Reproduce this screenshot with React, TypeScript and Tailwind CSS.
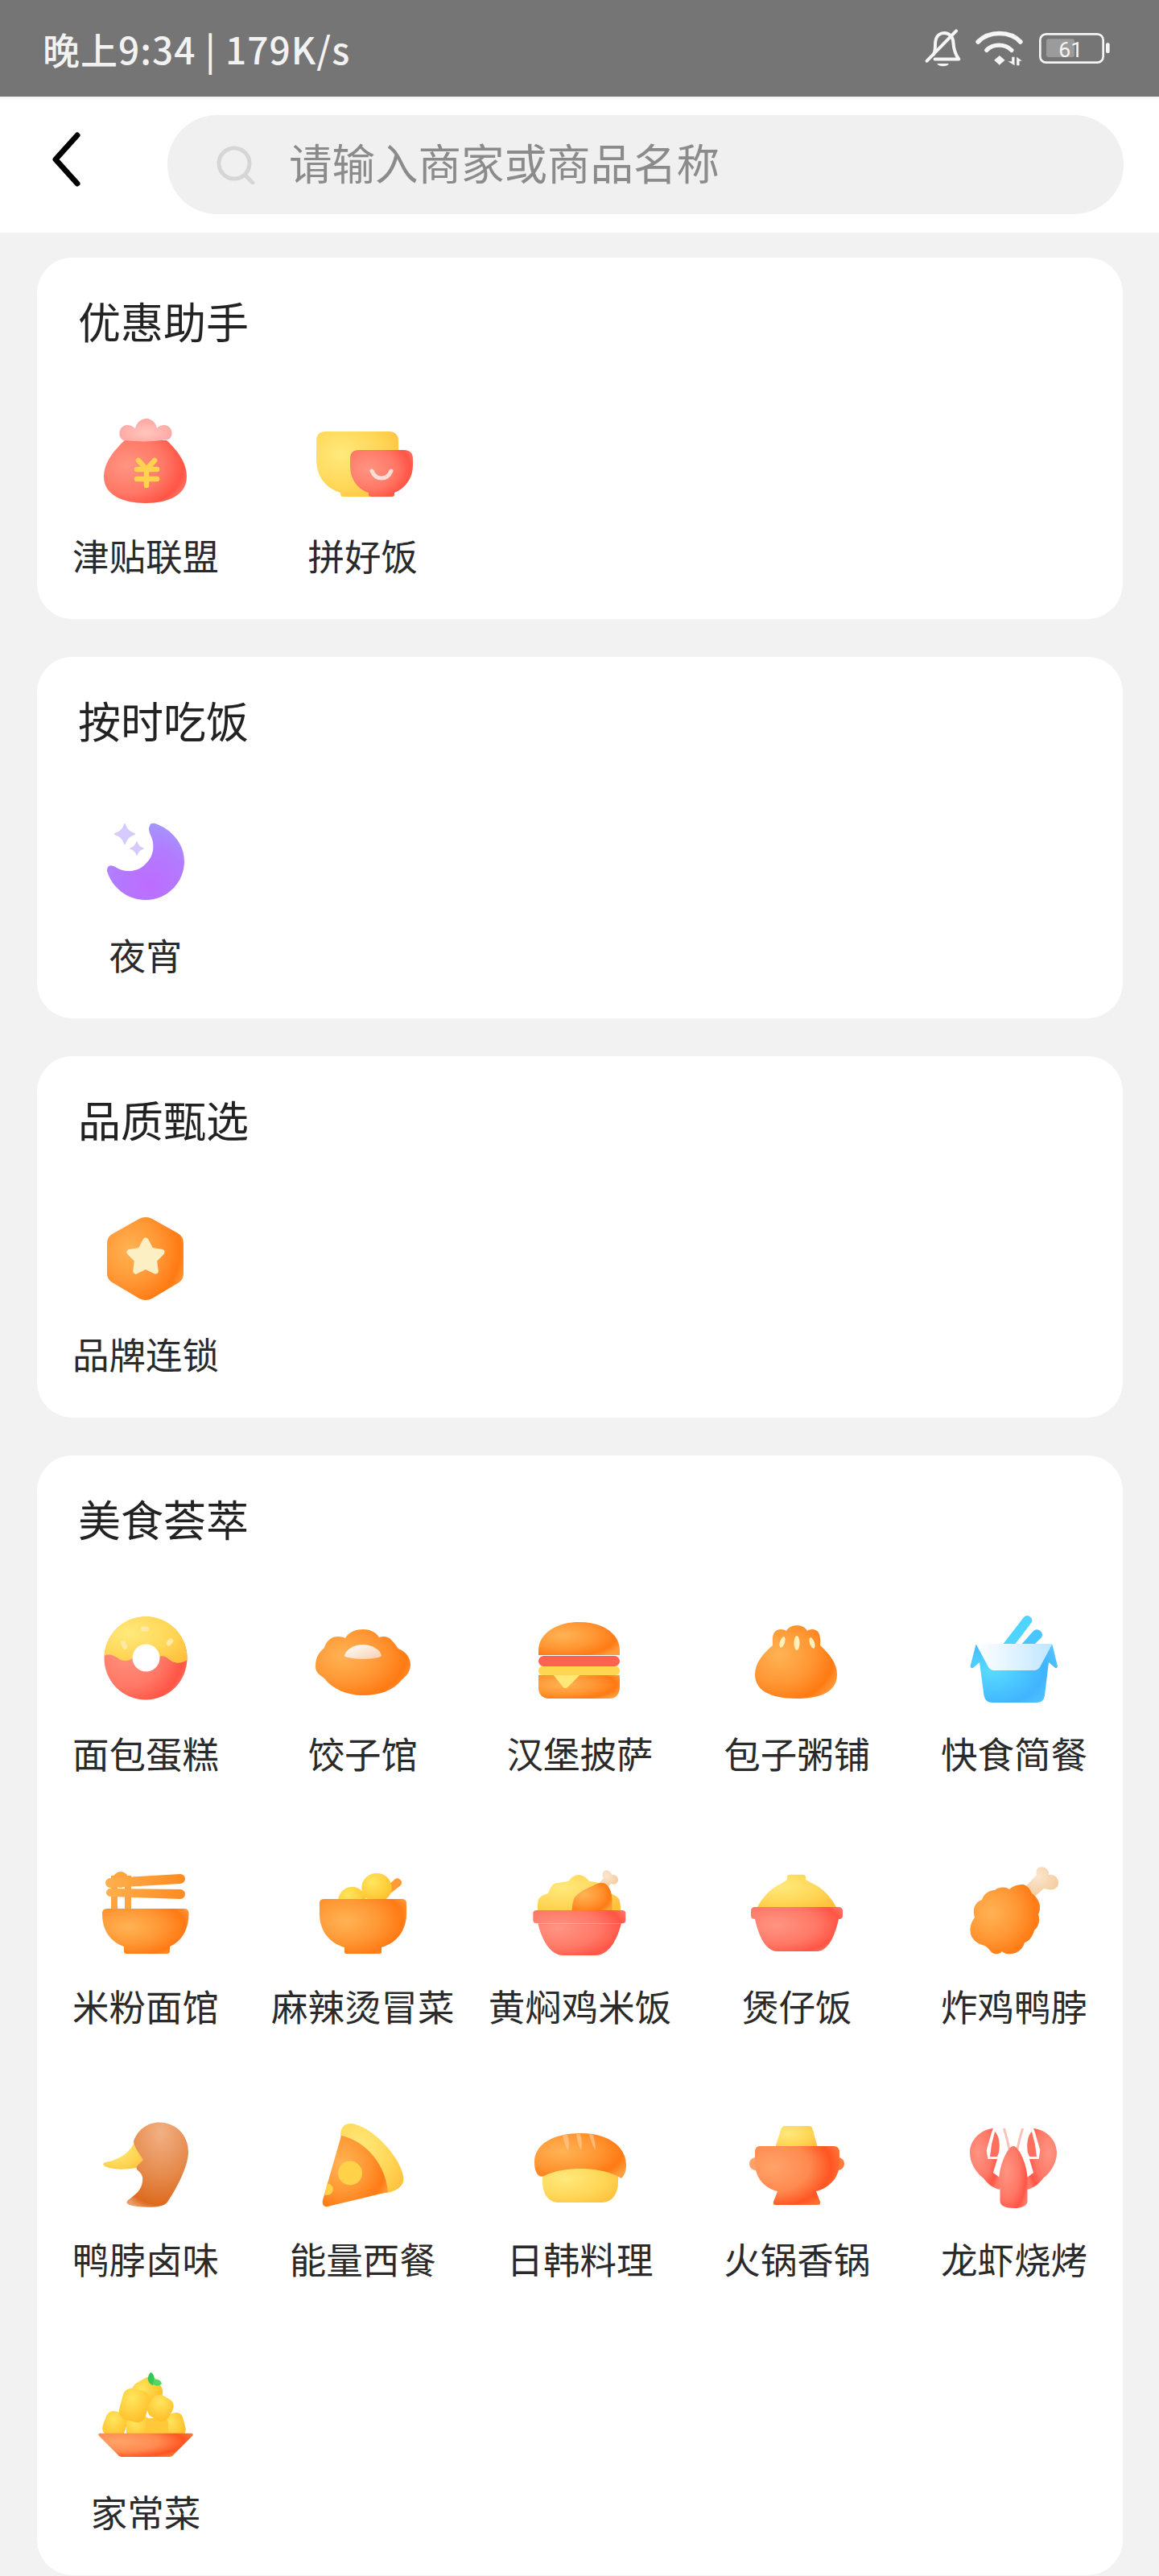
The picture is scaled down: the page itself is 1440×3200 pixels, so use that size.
import type { ReactNode } from "react";

// Shared gradients, referenced by every food icon
const SharedGradients = () => (
  <svg className="block h-0 w-0" aria-hidden="true">
    <defs>
      <radialGradient id="gOrange" cx=".3" cy=".4" r=".8">
        <stop offset="0" stopColor="#ffb354" />
        <stop offset=".5" stopColor="#ff9633" />
        <stop offset=".82" stopColor="#ff7a14" />
        <stop offset="1" stopColor="#ff9c3c" />
      </radialGradient>
      <linearGradient id="gOrangeL" x1="0" y1="0" x2="1" y2="0">
        <stop offset="0" stopColor="#ffb04f" />
        <stop offset="1" stopColor="#ff8a20" />
      </linearGradient>
      <radialGradient id="gRed" cx=".28" cy=".4" r=".8">
        <stop offset="0" stopColor="#ff9482" />
        <stop offset=".55" stopColor="#ff7866" />
        <stop offset=".85" stopColor="#ff5546" />
        <stop offset="1" stopColor="#ff7766" />
      </radialGradient>
      <radialGradient id="gYellow" cx=".3" cy=".35" r=".85">
        <stop offset="0" stopColor="#ffe97c" />
        <stop offset=".6" stopColor="#ffd656" />
        <stop offset="1" stopColor="#ffc03c" />
      </radialGradient>
      <radialGradient id="gNugget" cx=".35" cy=".3" r=".8">
        <stop offset="0" stopColor="#ffe65e" />
        <stop offset="1" stopColor="#ffbe28" />
      </radialGradient>
      <radialGradient id="gHot" cx=".22" cy=".35" r=".85">
        <stop offset="0" stopColor="#ffa36a" />
        <stop offset=".5" stopColor="#ff8a50" />
        <stop offset=".8" stopColor="#ff5522" />
        <stop offset="1" stopColor="#ff7a3c" />
      </radialGradient>
      <radialGradient id="gBlue" cx=".25" cy=".45" r=".85">
        <stop offset="0" stopColor="#58dcff" />
        <stop offset=".7" stopColor="#40b4ff" />
        <stop offset="1" stopColor="#58c8ff" />
      </radialGradient>
      <linearGradient id="gLid" x1="0" y1="0" x2="1" y2="0">
        <stop offset="0" stopColor="#ffffff" />
        <stop offset="1" stopColor="#bfe6ff" />
      </linearGradient>
      <radialGradient id="gPurple" cx=".55" cy=".8" r=".8">
        <stop offset="0" stopColor="#bd6cff" />
        <stop offset=".6" stopColor="#b27bff" />
        <stop offset="1" stopColor="#a496ff" />
      </radialGradient>
      <radialGradient id="gDuck" cx=".55" cy=".12" r=".95">
        <stop offset="0" stopColor="#f2b084" />
        <stop offset=".55" stopColor="#e58a4c" />
        <stop offset=".9" stopColor="#dd6a1e" />
        <stop offset="1" stopColor="#e89a68" />
      </radialGradient>
      <radialGradient id="gBone" cx=".4" cy=".3" r=".8">
        <stop offset="0" stopColor="#fbe6cf" />
        <stop offset="1" stopColor="#f2c592" />
      </radialGradient>
      <radialGradient id="gKnot" cx=".5" cy=".6" r=".6">
        <stop offset="0" stopColor="#ffc6be" />
        <stop offset="1" stopColor="#ffa5a0" />
      </radialGradient>
      <linearGradient id="gCream" x1="0" y1="0" x2="1" y2="1">
        <stop offset="0" stopColor="#ffffff" />
        <stop offset="1" stopColor="#f6cfb0" />
      </linearGradient>
    </defs>
  </svg>
);

const Icon = ({ children }: { children: ReactNode }) => (
  <svg viewBox="0 0 120 120" className="h-[120px] w-[120px] overflow-visible">
    {children}
  </svg>
);

const sparkle = (x: number, y: number, r: number) =>
  `M${x} ${y - r}Q${x + r * 0.22} ${y - r * 0.22} ${x + r} ${y}Q${x + r * 0.22} ${y + r * 0.22} ${x} ${y + r}Q${x - r * 0.22} ${y + r * 0.22} ${x - r} ${y}Q${x - r * 0.22} ${y - r * 0.22} ${x} ${y - r}Z`;

const icons: Record<string, ReactNode> = {
  bag: (
    <Icon>
      <path d="M34 35C22 46 8 62 8 80C8 102 30 113 60 113C90 113 111 102 111 80C111 62 98 46 86 35Z" fill="url(#gRed)" />
      <path d="M33 35C25 33 25 17 37 16C41 16 44 18 47 20C49 12 55 8 61 8C67 8 73 13 74 20C76 17 80 16 83 16C95 17 95 33 87 34C70 37 50 37 33 35Z" fill="url(#gKnot)" />
      <path d="M51 60L61 71L71 60M49 71H74M49 83H74M61 71V91" fill="none" stroke="#ffd34f" strokeWidth="6.5" strokeLinecap="round" strokeLinejoin="round" />
    </Icon>
  ),
  bowls: (
    <Icon>
      <path d="M2 36Q2 24 14 24H92Q104 24 104 36V60C104 84 88 98 69 100V105H35Q32 105 32 100C12 94 2 78 2 58Z" fill="url(#gYellow)" />
      <path d="M44 58Q44 47 55 47H111Q122 47 122 58V66C122 84 110 96 99 100V102Q99 105 96 105H70Q67 105 67 102V100C54 96 44 84 44 66Z" fill="url(#gRed)" />
      <path d="M71 73C76 85 90 85 95 73" fill="none" stroke="#fcdcd6" strokeWidth="5" strokeLinecap="round" />
    </Icon>
  ),
  moon: (
    <Icon>
      <path d="M65 18Q63 21 65 27C72 40 71 55 60 65C50 76 34 76 24 70C18 66 12 66 12 74C18 95 38 110 60 110C87 110 108 88 108 62C108 40 92 22 72 15C68 14 65 15 65 18Z" fill="url(#gPurple)" />
      <path d={sparkle(34, 28, 12)} fill="#d6caff" stroke="#d6caff" strokeWidth="2" strokeLinejoin="round" />
      <path d={sparkle(49, 46, 8)} fill="#d6caff" stroke="#d6caff" strokeWidth="1.5" strokeLinejoin="round" />
    </Icon>
  ),
  hex: (
    <Icon>
      <path d="M52 10Q60 6 68 10L100 28Q107 32 107 40V78Q107 86 100 90L68 109Q60 113 52 109L20 90Q12 86 12 78V40Q12 32 20 28Z" fill="url(#gOrange)" />
      <polygon points="60,37 66.5,49.1 80,51.5 70.5,61.4 72.3,75 60,69 47.7,75 49.5,61.4 40,51.5 53.5,49.1" fill="#fcefc4" stroke="#fcefc4" strokeWidth="7" strokeLinejoin="round" />
    </Icon>
  ),
  donut: (
    <Icon>
      <circle cx="60" cy="60" r="51.5" fill="url(#gRed)" />
      <path d="M8.6 57A51.5 51.5 0 0 1 111.5 62C104 67 96 67 90 62C85 58 82 56 76 58L44 60C38 64 30 64 26 60C20 56 14 54 8.6 57Z" fill="url(#gYellow)" />
      <circle cx="60.5" cy="59.5" r="17" fill="#ffffff" />
      <rect x="54" y="20.5" width="10" height="6" rx="3" fill="#ffe9a8" />
      <rect x="30" y="38" width="6" height="11" rx="3" fill="#ffe9a8" transform="rotate(-20 33 43)" />
      <rect x="87" y="35" width="6" height="10" rx="3" fill="#ffe9a8" transform="rotate(40 90 40)" />
    </Icon>
  ),
  jiaozi: (
    <Icon>
      <path d="M1 70C1 58 6 52 12 47C14 38 22 32 30 33C34 33 36 34 38 35C42 27 52 24 60 24C68 24 76 27 80 34C86 32 92 33 96 38C100 42 102 46 104 48C114 52 119 60 119 68C119 76 114 82 108 87C98 100 80 106 60 106C40 106 22 98 12 85C6 80 1 78 1 70Z" fill="url(#gOrange)" />
      <path d="M37 57C38 50 48 43 60 43C72 43 82 50 83 57C78 62 42 62 37 57Z" fill="url(#gCream)" />
    </Icon>
  ),
  burger: (
    <Icon>
      <path d="M9 50C9 30 30 15 60 15C90 15 110 30 110 50V56H9Z" fill="url(#gOrange)" />
      <rect x="9" y="57" width="101" height="13" rx="6.5" fill="#ff6152" />
      <path d="M9 81V97C9 104 14 110 22 110H98C106 110 110 103 110 95V81Z" fill="url(#gOrange)" />
      <path d="M15 70H104Q110 70 110 75.5Q110 81 104 81H60L46 95Q42 99 39 95L28 81H15Q9 81 9 75.5Q9 70 15 70Z" fill="#ffd650" />
      <path d="M28 81H60L46 95Q42 99 39 95Z" fill="#ffe878" />
    </Icon>
  ),
  bao: (
    <Icon>
      <path d="M60 19C66 19 71 22 73 26C76 23 84 23 87 28C90 34 89 40 89 44C100 54 110 66 110 80C110 98 96 110 60 110C24 110 8 98 8 80C8 66 18 54 30 44C30 38 29 33 32 28C35 23 43 23 47 26C49 22 54 19 60 19Z" fill="url(#gOrange)" />
      <ellipse cx="60" cy="41" rx="3.5" ry="9" fill="#fff0bd" />
      <ellipse cx="42" cy="40" rx="3" ry="7" fill="#fff0bd" transform="rotate(18 42 40)" />
      <ellipse cx="79" cy="41" rx="3" ry="7" fill="#fff0bd" transform="rotate(-18 79 41)" />
    </Icon>
  ),
  box: (
    <Icon>
      <path d="M45 44L72 9A6 6 0 0 1 82 15L60 44Z" fill="#4fd4ff" />
      <path d="M68 44L84 26A6.5 6.5 0 0 1 94 34L84 44Z" fill="#47c6ff" />
      <path d="M12.5 43L5.5 70Q7 74 10 71L17 65L22.5 106Q24 115 33 115H88Q97 115 98 106L103 65L110 71Q113 74 114 70L107.5 43Z" fill="url(#gBlue)" />
      <path d="M12.5 42H107.5L92 71Q89 75 85 75H35Q31 75 28 71Z" fill="url(#gLid)" />
    </Icon>
  ),
  noodle: (
    <Icon>
      <rect x="17" y="16" width="8" height="42" fill="#ffa540" />
      <rect x="34" y="16" width="8" height="42" fill="#ffa540" />
      <circle cx="29" cy="21" r="10" fill="#ffa540" />
      <path d="M16 19L103 14A6 6 0 0 1 103 26L16 31A6 6 0 0 1 16 19Z" fill="url(#gOrangeL)" />
      <path d="M16 32L103 33A6 6 0 0 1 103 45L16 42A5 5 0 0 1 16 32Z" fill="url(#gOrangeL)" />
      <path d="M6 63Q6 57 12 57H108Q113.5 57 113.5 63C113.5 84 104 98 90 104V110Q90 113 87 113H36Q33 113 33 110V104C16 98 6 84 6 63Z" fill="url(#gOrange)" />
    </Icon>
  ),
  mala: (
    <Icon>
      <path d="M88 31L100 20A5.5 5.5 0 0 1 107 28L94 38Z" fill="#ff9a35" />
      <ellipse cx="46.5" cy="48" rx="17.5" ry="18" fill="url(#gNugget)" />
      <ellipse cx="77" cy="31" rx="18.75" ry="18" fill="url(#gNugget)" />
      <path d="M6 50Q6 45 12 45H108Q114 45 114 50V63C114 84 102 100 83 105V111Q83 113 80 113H40Q37 113 37 111V105C18 100 6 84 6 63Z" fill="url(#gOrange)" />
    </Icon>
  ),
  chickenRice: (
    <Icon>
      <path d="M8 60C8 50 8 45 11 43C14 40 18 39 21 38C24 30 27 25 33 25C38 24 42 24 46 23C50 18 54 15 59 15C65 15 69 19 72 23C76 23 80 24 84 25C90 28 96 34 99 38C103 40 107 42 109 45C111 50 111 55 111 60Z" fill="url(#gYellow)" />
      <path d="M84 26L90 19C87 15 89 9 94 9.5C98 10 100 13 100 15C105 14 108 18 108 21C108 26 103 28 99 26L93 33Z" fill="url(#gBone)" />
      <path d="M50.5 60C51 52 52 47 54 43C60 36 68 32 76 29C82 25 88 24 92 26C97 29 100 36 100.5 45V60Z" fill="url(#gOrange)" />
      <path d="M8 75L8.3 75C13 96 24 115 40 115H80C96 115 107 96 112 75ZM7 59H113Q117.3 59 117.3 63V71Q117.3 75.3 113 75.3H7Q2.3 75.3 2.3 71V63Q2.3 59 7 59Z" fill="url(#gRed)" />
    </Icon>
  ),
  claypot: (
    <Icon>
      <path d="M48 18Q48 14.7 52 14.7H67Q71 14.7 71 18V21L78 25C92 31 102 42 109 55H11C18 42 28 31 42 25L48 21Z" fill="url(#gYellow)" />
      <path d="M8 55H112Q117 55 117 60V66Q117 70 112 70C108 88 100 110 85 110H36C20 110 12 88 8 70Q3 70 3 66V60Q3 55 8 55Z" fill="url(#gRed)" />
    </Icon>
  ),
  drumstick: (
    <Icon>
      <path d="M72 32L88 15C86 9 90 4 96 5.5C101 6.5 104 11 103 15C109 14 115 18 115 25C115 31 109 35 103 33C100 33 99 32 97 32L82 45Z" fill="url(#gBone)" />
      <path d="M70 27C76 27 80 33 82 38C88 42 93 50 92 56C92 60 91 62 90 64C93 72 90 80 85 84C83 92 78 98 73 99C71 107 64 113 56 113C51 114 47 112 45 110C41 115 33 114 30 109C26 104 24 103 20 102C10 98 5 92 5.5 82C6 76 8 72 11 68C8 58 11 49 20 46C22 38 30 34 36 34C40 30 50 29 54 33C56 31 62 27 70 27Z" fill="url(#gOrange)" />
    </Icon>
  ),
  duck: (
    <Icon>
      <path d="M47 30C44 42 30 55 10 58Q5 60 9 63C20 68 36 67 48 65L58 55Z" fill="url(#gYellow)" />
      <path d="M45 32C50 18 62 8.6 77 8.6C98 8.6 113 25 113 45C113 62 100 88 88 106C85 111 80 113 68 113.8C56 114 44 113 38 110Q35 108 38 105C48 98 55 92 56 82C57 76 55 72 50 68Q47 65 50 62L57 55C52 47 46 40 45 32Z" fill="url(#gDuck)" />
    </Icon>
  ),
  pizza: (
    <Icon>
      <path d="M32 22Q34 9 46 10C72 14 105 50 110 75C112 85 106 92 91 96L50 100L33 60Z" fill="url(#gYellow)" />
      <path d="M33 25C65 32 88 62 91 95L16 113C11 114 9 110 10 105Z" fill="url(#gOrange)" />
      <circle cx="44" cy="71.5" r="15" fill="#ffd24a" />
      <path d="M15.5 84.5A7 7 0 0 1 16 98.7L12.5 99Z" fill="#ffd24a" />
    </Icon>
  ),
  bread: (
    <Icon>
      <path d="M14 62H108V82C108 98 100 108 88 108H34C22 108 14 98 14 82Z" fill="url(#gYellow)" />
      <path d="M4 58C4 35 28 22 62 22C95 22 118 38 118 62C118 68 116 74 112 78C100 70 80 66 62 66C46 66 30 68 16 75C10 78 4 72 4 58Z" fill="url(#gOrange)" />
      <path d="M39 25Q44 24 45 24Q48 33 46 44Q41 36 39 25ZM56 23L61 23Q64 32 62 43Q57 34 56 23ZM72 23L77 24Q80 34 80 43Q74 34 72 23Z" fill="#ffc58a" opacity=".75" />
    </Icon>
  ),
  hotpot: (
    <Icon>
      <path d="M45 13H75Q79 13 80 18L86 40H33L40 18Q41 13 45 13Z" fill="url(#gYellow)" />
      <circle cx="9" cy="60" r="8" fill="#ffa36a" />
      <circle cx="111" cy="60" r="8" fill="#ff7a3c" />
      <path d="M14 38H106Q113 38 113 46V58C113 78 100 90 84 94L89 107Q90 111 86 111H34Q30 111 31 107L36 94C20 90 8 78 8 58V46Q8 38 14 38Z" fill="url(#gHot)" />
    </Icon>
  ),
  lobster: (
    <Icon>
      <path d="M47.3 16C50 24 52 32 54 42M70.7 16C68 24 66 32 64 42" fill="none" stroke="#f9c2b8" strokeWidth="3" />
      <g>
        <path d="M34 16C16 18 5 32 5 46C5 60 14 72 22 78C28 86 34 90 42 92L42 77L34 71L39 54H27.3L25.7 43L32.3 20Z" fill="url(#gRed)" />
        <path d="M36 20C41 24 43 36 41 46L39 51H30L32 36Z" fill="#ff6f5e" />
      </g>
      <g transform="translate(118 0) scale(-1 1)">
        <path d="M34 16C16 18 5 32 5 46C5 60 14 72 22 78C28 86 34 90 42 92L42 77L34 71L39 54H27.3L25.7 43L32.3 20Z" fill="url(#gRed)" />
        <path d="M36 20C41 24 43 36 41 46L39 51H30L32 36Z" fill="#ff6f5e" />
      </g>
      <path d="M59 38C66 38 77 62 77 83V90H76.5V106C76.5 112 70 115 59.5 115C49 115 42.5 112 42.5 106V90H41V83C41 62 52 38 59 38Z" fill="url(#gRed)" />
    </Icon>
  ),
  homestyle: (
    <Icon>
      <rect x="44" y="13" width="36" height="32" rx="12" fill="url(#gNugget)" transform="rotate(-30 62 29)" />
      <rect x="8" y="54" width="28" height="32" rx="10" fill="url(#gNugget)" transform="rotate(20 22 70)" />
      <rect x="82" y="56" width="26" height="30" rx="8" fill="url(#gNugget)" transform="rotate(-15 95 70)" />
      <rect x="36" y="60" width="30" height="28" rx="8" fill="url(#gNugget)" />
      <rect x="60" y="62" width="28" height="24" rx="6" fill="#ffc93a" />
      <rect x="64" y="34" width="29" height="30" rx="10" fill="url(#gNugget)" transform="rotate(30 78 49)" />
      <rect x="29" y="26" width="34" height="40" rx="11" fill="url(#gNugget)" transform="rotate(15 46 46)" />
      <path d="M66 5Q62 10 63 15Q65 20 69 21Q72 15 70 9Q68 5 66 5Z" fill="#35c857" />
      <path d="M69 20Q76 24 80 19Q78 13 70 14Z" fill="#4fd862" />
      <path d="M3 80.7H117Q120 81 118 84L95 107Q93 110 90 110H30Q27 110 25 107L2 84Q0 81 3 80.7Z" fill="url(#gHot)" />
    </Icon>
  ),
};

const sections = [
  {
    title: "优惠助手",
    items: [
      ["津贴联盟", "bag"],
      ["拼好饭", "bowls"],
    ],
  },
  { title: "按时吃饭", items: [["夜宵", "moon"]] },
  { title: "品质甄选", items: [["品牌连锁", "hex"]] },
  {
    title: "美食荟萃",
    items: [
      ["面包蛋糕", "donut"],
      ["饺子馆", "jiaozi"],
      ["汉堡披萨", "burger"],
      ["包子粥铺", "bao"],
      ["快食简餐", "box"],
      ["米粉面馆", "noodle"],
      ["麻辣烫冒菜", "mala"],
      ["黄焖鸡米饭", "chickenRice"],
      ["煲仔饭", "claypot"],
      ["炸鸡鸭脖", "drumstick"],
      ["鸭脖卤味", "duck"],
      ["能量西餐", "pizza"],
      ["日韩料理", "bread"],
      ["火锅香锅", "hotpot"],
      ["龙虾烧烤", "lobster"],
      ["家常菜", "homestyle"],
    ],
  },
];

const StatusBar = () => (
  <div className="flex h-[120px] items-center justify-between bg-[#757575] pl-[53px] pr-[60px]">
    <span className="text-[46px] font-medium leading-none tracking-[1px] text-[#f2f2f2]">晚上9:34 | 179K/s</span>
    <div className="flex items-center">
      {/* Muted bell */}
      <svg viewBox="30 25 140 145" className="h-[48px] w-[47px]">
        <path d="M64 122C74 105 70 88 72 72C75 50 90 40 105 40C125 40 138 55 139 75C140 95 146 120 160 138H70" fill="none" stroke="#f5f5f5" strokeWidth="12" strokeLinecap="round" strokeLinejoin="round" />
        <path d="M150 32L40 145" stroke="#f5f5f5" strokeWidth="12" strokeLinecap="round" />
        <path d="M78 155H122C118 168 84 168 78 155Z" fill="#f5f5f5" />
      </svg>
      {/* Wifi */}
      <svg viewBox="215 30 185 135" className="ml-[15px] h-[45px] w-[62px]">
        <path d="M230 72C270 30 350 30 388 72" fill="none" stroke="#f5f5f5" strokeWidth="17" strokeLinecap="round" />
        <path d="M262 103C285 78 330 78 355 103" fill="none" stroke="#f5f5f5" strokeWidth="16" strokeLinecap="round" />
        <path d="M290 140L310 123L330 140L310 158Z" fill="#f5f5f5" />
        <path d="M366 128V160L342 145H356V128ZM374 160V128L394 143H384V160Z" fill="#f5f5f5" />
      </svg>
      {/* Battery */}
      <svg viewBox="450 35 270 120" className="ml-[18px] h-[40px] w-[90px]">
        <rect x="457" y="42" width="235" height="106" rx="22" fill="none" stroke="#f5f5f5" strokeWidth="8" />
        <rect x="480" y="60" width="105" height="68" rx="8" fill="#9b9b9b" />
        <text x="571" y="127" textAnchor="middle" fontSize="80" fontFamily="Roboto, sans-serif" fill="#f5f5f5">61</text>
        <rect x="702" y="75" width="14" height="38" rx="6" fill="#f5f5f5" />
      </svg>
    </div>
  </div>
);

const SearchHeader = () => (
  <div className="flex h-[169px] items-center bg-white pr-[44px] shadow-[inset_0_5px_4px_-3px_rgba(0,0,0,0.06)]">
    <div className="flex w-[208px] shrink-0 pb-[14px] pl-[61px]">
      <svg viewBox="0 0 40 70" className="h-[70px] w-[40px]">
        <path d="M35 5L8 35L35 65" fill="none" stroke="#000000" strokeWidth="7" strokeLinecap="round" strokeLinejoin="round" />
      </svg>
    </div>
    <div className="flex h-[123px] flex-1 items-center rounded-full bg-[#f0f0f0] pl-[61px]">
      <svg viewBox="0 0 48 48" className="h-[48px] w-[48px] shrink-0">
        <circle cx="22" cy="22" r="19" fill="none" stroke="#d6d6d6" strokeWidth="5" />
        <path d="M36 37L45 46" stroke="#d6d6d6" strokeWidth="5" strokeLinecap="round" />
      </svg>
      <span className="ml-[42px] -mt-[7px] text-[53.5px] leading-none text-[#8b8b8b]">请输入商家或商品名称</span>
    </div>
  </div>
);

const App = () => {
  return (
    <div className="h-[3200px] overflow-hidden bg-[#f2f2f2] font-['Noto_Sans_CJK_SC',sans-serif]">
      <SharedGradients />
      <StatusBar />
      <SearchHeader />

      <main className="flex flex-col gap-[47px] pl-[46px] pr-[45px] pt-[31px]">
        {sections.map((section) => (
          <section key={section.title} className="rounded-[44px] bg-white pb-[47px] pt-[38px]">
            <h2 className="pl-[51px] text-[53px] font-normal leading-[80px] text-[#222222]">{section.title}</h2>
            <div className="mt-[74px] grid grid-cols-5 gap-y-[104px]">
              {section.items.map(([label, icon]) => (
                <div key={label} className="flex flex-col items-center">
                  {icons[icon]}
                  <span className="mt-[24px] whitespace-nowrap text-[45.5px] leading-[66px] text-[#2a2a2a]">{label}</span>
                </div>
              ))}
            </div>
          </section>
        ))}
      </main>
    </div>
  );
};

export default App;
